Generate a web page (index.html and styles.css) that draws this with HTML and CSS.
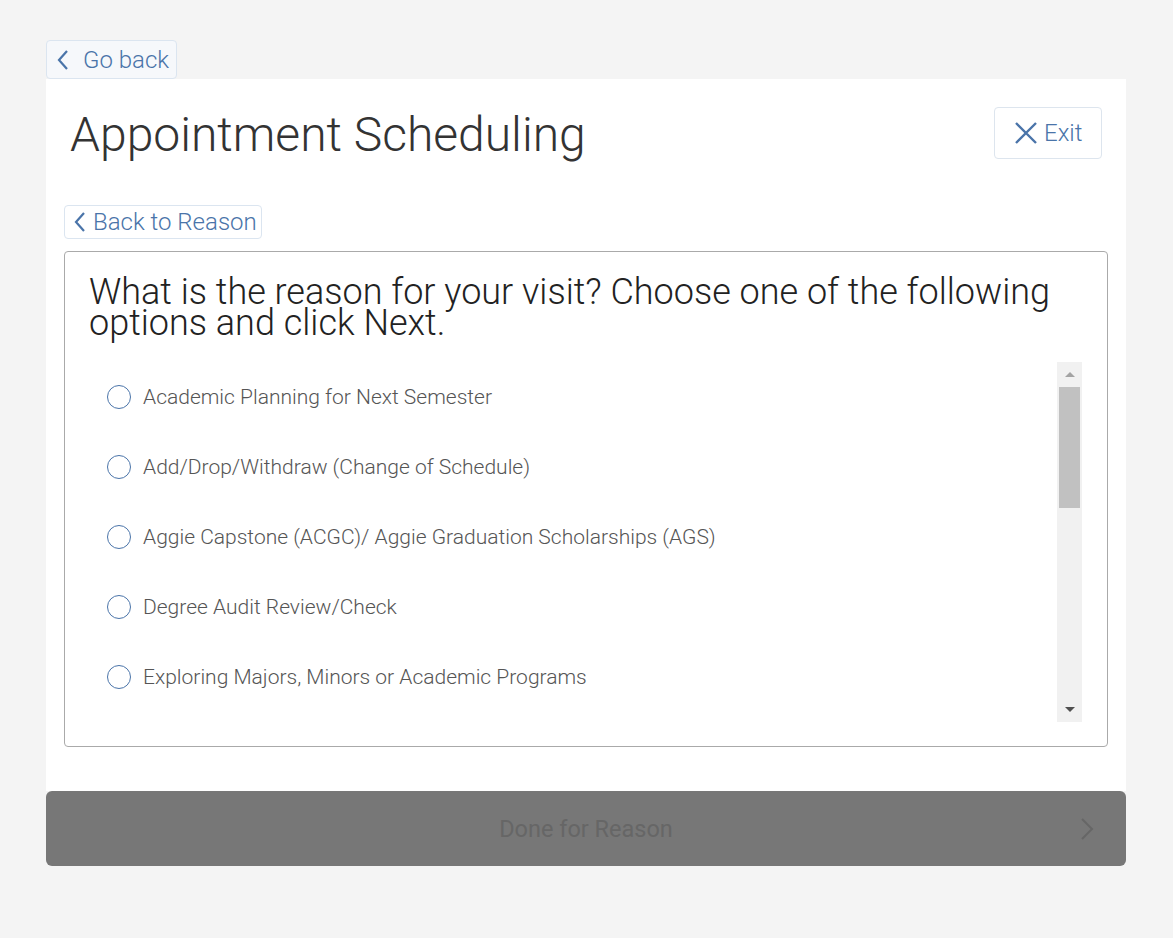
FILE: index.html
```html
<!DOCTYPE html>
<html lang="en">
<head>
  <meta charset="UTF-8" />
  <title>Appointment Scheduling</title>
  <link rel="stylesheet" href="styles.css">
</head>
<body>
  <div class="page">
    <button class="link-btn go-back">
      <svg width="14" height="22" viewBox="0 0 14 22"><path d="M11 2 L3 11 L11 20" fill="none" stroke="currentColor" stroke-width="2.2"/></svg>
      Go back
    </button>

    <div class="card">
      <div class="card-head">
        <h1>Appointment Scheduling</h1>
        <button class="exit-btn">
          <svg width="24" height="24" viewBox="0 0 24 24"><path d="M2 2 L22 22 M22 2 L2 22" fill="none" stroke="currentColor" stroke-width="2.4"/></svg>
          Exit
        </button>
      </div>

      <button class="link-btn back-reason">
        <svg width="14" height="22" viewBox="0 0 14 22"><path d="M11 2 L3 11 L11 20" fill="none" stroke="currentColor" stroke-width="2.2"/></svg>
        Back to Reason
      </button>

      <div class="question-box">
        <h2>What is the reason for your visit? Choose one of the following options and click Next.</h2>
        <div class="list-wrap">
          <ul class="options">
            <li><span class="radio"></span>Academic Planning for Next Semester</li>
            <li><span class="radio"></span>Add/Drop/Withdraw (Change of Schedule)</li>
            <li><span class="radio"></span>Aggie Capstone (ACGC)/ Aggie Graduation Scholarships (AGS)</li>
            <li><span class="radio"></span>Degree Audit Review/Check</li>
            <li><span class="radio"></span>Exploring Majors, Minors or Academic Programs</li>
          </ul>
          <div class="scrollbar">
            <div class="arrow up"></div>
            <div class="track"><div class="thumb"></div></div>
            <div class="arrow down"></div>
          </div>
        </div>
      </div>
    </div>

    <button class="done-btn">
      <span>Done for Reason</span>
      <svg class="chev" width="14" height="24" viewBox="0 0 14 24"><path d="M2 2 L12 12 L2 22" fill="none" stroke="currentColor" stroke-width="2"/></svg>
    </button>
  </div>
</body>
</html>
```

FILE: styles.css
```css
* {
  margin: 0;
  padding: 0;
  box-sizing: border-box;
}
body {
  font-family: 'Roboto', sans-serif;
  font-weight: 300;
  background: #f4f4f4;
  color: #333;
  padding-top: 40px;
}
button {
  font-family: inherit;
  font-weight: 300;
  cursor: pointer;
}
.page {
  width: 1080px;
  margin-left: 46px;
}
.link-btn {
  display: inline-flex;
  align-items: center;
  gap: 6px;
  color: #4a74a9;
  background: #f6f8fb;
  border: 1px solid #dbe5f0;
  border-radius: 4px;
}
.go-back {
  height: 39px;
  padding: 0 7px 0 9px;
  font-size: 24px;
  gap: 13px;
}
.card {
  background: #fff;
  padding: 28px 18px 44px 18px;
}
.card-head {
  display: flex;
  justify-content: space-between;
  align-items: flex-start;
  margin: 0 6px 42px 6px;
}
.card-head h1 {
  font-size: 48px;
  font-weight: 300;
  color: #333;
  line-height: 56px;
}
.exit-btn {
  display: flex;
  align-items: center;
  gap: 6px;
  height: 52px;
  width: 108px;
  padding-left: 19px;
  font-size: 24px;
  color: #4a74a9;
  background: #fff;
  border: 1px solid #dde5ee;
  border-radius: 4px;
}
.back-reason {
  height: 34px;
  padding: 0 4px 0 8px;
  font-size: 24px;
  background: #fff;
  margin-bottom: 12px;
}
.question-box {
  border: 1px solid #aaa;
  border-radius: 4px;
  padding: 25px 25px 24px 24px;
}
.question-box h2 {
  font-size: 36px;
  font-weight: 300;
  line-height: 31px;
  color: #222;
  margin-bottom: 23px;
}
.list-wrap {
  display: flex;
  height: 360px;
}
.options {
  flex: 1;
  list-style: none;
  overflow: hidden;
}
.options li {
  display: flex;
  align-items: center;
  height: 70px;
  padding-left: 18px;
  font-size: 21px;
  color: #555;
}
.radio {
  width: 24px;
  height: 24px;
  border: 1.5px solid #4a74a9;
  border-radius: 50%;
  margin-right: 12px;
  flex-shrink: 0;
}
.scrollbar {
  width: 25px;
  background: #f1f1f1;
  display: flex;
  flex-direction: column;
}
.arrow {
  height: 25px;
  display: flex;
  align-items: center;
  justify-content: center;
}
.arrow::before {
  content: "";
  border-left: 5px solid transparent;
  border-right: 5px solid transparent;
}
.arrow.up::before {
  border-bottom: 5px solid #a3a3a3;
}
.arrow.down::before {
  border-top: 5px solid #505050;
}
.track {
  flex: 1;
  padding: 0 2px;
}
.thumb {
  height: 121px;
  background: #c1c1c1;
}
.done-btn {
  width: 100%;
  height: 75px;
  display: flex;
  align-items: center;
  justify-content: center;
  position: relative;
  background: #777;
  border: none;
  border-radius: 6px;
  color: #666;
  font-size: 23.5px;
  font-weight: 400;
}
.done-btn .chev {
  position: absolute;
  right: 32px;
  top: 26px;
  color: #666;
}
```
